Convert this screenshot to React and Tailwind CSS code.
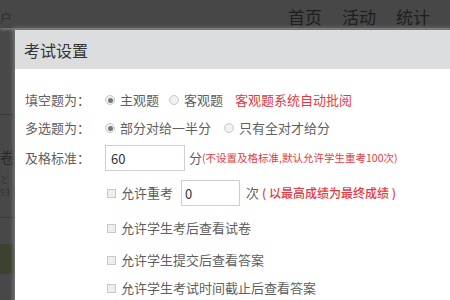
const font = { fontFamily: '"Noto Sans CJK SC", "Liberation Sans", sans-serif' };

function Radio({ checked }) {
  return (
    <span className="mr-[5px] inline-flex h-[10px] w-[10px] shrink-0 items-center justify-center rounded-full border border-[#c9c9c9] bg-[#f1f1f1]">
      {checked && <span className="h-[5px] w-[5px] rounded-full bg-[#777]" />}
    </span>
  );
}

function Check() {
  return <span className="mr-[5px] inline-block h-[9px] w-[9px] shrink-0 border border-[#c9c9c9] bg-[#eeeeee]" />;
}

function Row({ label, children, className = "" }) {
  return (
    <div className={`flex items-center ${className}`}>
      <div className="w-[80px] shrink-0">{label}</div>
      <div className="flex items-center">{children}</div>
    </div>
  );
}

export default function App() {
  return (
    <div className="relative h-[300px] w-[450px] overflow-hidden bg-[#484848] text-[13px] text-[#5f5f5f]" style={font}>
      {/* dimmed page behind */}
      <div className="flex h-[28px] items-center justify-between bg-[#474747] pr-[20px] shadow-[0_2px_3px_rgba(200,200,200,0.35)]">
        <span className="mt-[8px] text-[12px] text-[#2e2e2e]">户</span>
        <nav className="mt-[6px] flex gap-[20px] text-[17px] text-[#1e1e1e]">
          <span>首页</span>
          <span>活动</span>
          <span>统计</span>
        </nav>
      </div>
      <div className="w-[14px] overflow-hidden">
        <div className="mt-[86px] border-t border-[#3a3a3a]" />
        <div className="mt-[32px] text-[15px] leading-[20px] text-[#2a2a2a]">卷</div>
        <div className="mt-[6px] text-[9px] leading-[13px] text-[#333]">
          <div>ど</div>
          <div>93</div>
        </div>
        <div className="mt-[18px] border-t border-[#3a3a3a]" />
        <div className="mt-[26px] h-[30px] bg-[#3c4230]" />
      </div>

      {/* modal */}
      <div className="absolute left-[15px] top-[30px] h-[300px] w-[460px] bg-white shadow-[0_0_4px_2px_rgba(150,150,150,0.6)]">
        <div className="flex h-[39px] items-center bg-[#dcdddf] pl-[9px] text-[16px] text-[#333]">考试设置</div>
        <div className="pl-[10px] pt-[21px]">
          <Row label="填空题为：" className="h-[20px]">
            <Radio checked />
            <span className="mr-[10px]">主观题</span>
            <Radio />
            <span className="mr-[12px]">客观题</span>
            <span className="text-[#e8383d]">客观题系统自动批阅</span>
          </Row>
          <Row label="多选题为：" className="mt-[8px] h-[20px]">
            <Radio checked />
            <span className="mr-[13px]">部分对给一半分</span>
            <Radio />
            <span>只有全对才给分</span>
          </Row>
          <Row label="及格标准：" className="mt-[7px] h-[26px]">
            <input
              readOnly
              value="60"
              className="h-[26px] w-[80px] border border-[#cfcfcf] px-[5px] text-[13px] text-[#333] outline-none"
              style={font}
            />
            <span className="ml-[4px]">分</span>
            <span className="text-[10.5px] text-[#e8383d]">(不设置及格标准,默认允许学生重考100次)</span>
          </Row>
          <div className="ml-[82px] mt-[9px] flex h-[26px] items-center">
            <Check />
            <span className="mr-[8px]">允许重考</span>
            <input
              readOnly
              value="0"
              className="h-[26px] w-[59px] border border-[#cfcfcf] px-[3px] text-[13px] text-[#333] outline-none"
              style={font}
            />
            <span className="ml-[6px]">次</span>
            <span className="ml-[3px] text-[12px] font-medium text-[#e8383d]">( 以最高成绩为最终成绩 )</span>
          </div>
          <div className="ml-[82px] mt-[12px] flex h-[20px] items-center">
            <Check />
            <span>允许学生考后查看试卷</span>
          </div>
          <div className="ml-[82px] mt-[12px] flex h-[20px] items-center">
            <Check />
            <span>允许学生提交后查看答案</span>
          </div>
          <div className="ml-[82px] mt-[8px] flex h-[20px] items-center">
            <Check />
            <span>允许学生考试时间截止后查看答案</span>
          </div>
        </div>
      </div>
    </div>
  );
}
